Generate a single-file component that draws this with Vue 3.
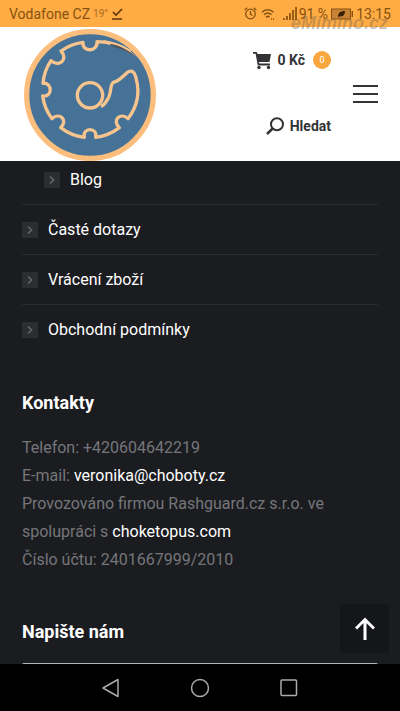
<template>

  <div class="screen">
    <div class="status-bar">
      <div class="status-left">
        <span>Vodafone CZ</span>
        <small>19°</small>
        <svg width="12" height="12" viewBox="0 0 12 12" fill="none" stroke="currentColor" stroke-width="1.600">
          <path d="M2 4l3 3 6-6M1 11h10" />
        </svg>
      </div>
      <div class="status-right">
        <svg class="alarm" width="13" height="13" viewBox="0 0 13 13" fill="none" stroke="currentColor" stroke-width="1.3">
          <circle cx="6.5" cy="7" r="4.8" />
          <path d="M6.5 4v3.3l2 1M.7 3l2.600-2.200M12.300 3L9.700 .8" />
        </svg>
        <svg class="wifi" width="14" height="12" viewBox="0 0 14 12" fill="none" stroke="currentColor" stroke-width="1.5">
          <path d="M1 4.200c3.300-3.200 8.200-3.200 11.500 0M3 6.800c2.200-2.100 5.200-2.100 7.500 0M5 9.200c1.100-1 2.400-1 3.500 0" />
          <path d="M10 11h1M12 11h1" />
        </svg>
        <svg width="14" height="13" viewBox="0 0 14 13" fill="none" stroke="currentColor" stroke-width="1.700">
          <path d="M1 13v-2M4 13V9M7 13V6M10 13V3M13 13V0" />
        </svg>
        <span class="percent">91 %</span>
        <svg class="battery" width="22" height="12" viewBox="0 0 22 12">
          <rect x=".5" y="1" width="19" height="10" fill="#c98334" stroke="currentColor" />
          <path d="M21.300 3v6" stroke="currentColor" stroke-width="1.400" />
          <path d="M7 9c0-4 2-6 7-6 0 4-2 6-5 5l-1 1z" fill="#3a2208" />
        </svg>
        <span>13:15</span>
      </div>
      <span class="watermark">eMimino.cz</span>
    </div>

    <header class="header">
      <a href="#" class="logo" aria-label="Choketopus">
        <svg width="132" height="132" viewBox="26 20 396 396" fill="none">
          <circle cx="224" cy="218" r="190" fill="#467298" stroke="#fbbe7c" stroke-width="16" />
          <g stroke="#f8c48d" stroke-width="10" stroke-linejoin="round">
            <path d="M345 88C316 68 280 59 245 58C248 90 200 90 203 60A143 143 0 0 0 137 86C160 110 132 136 107 115A143 143 0 0 0 83 183C112 180 112 226 82 221A143 143 0 0 0 110 289C132 268 160 294 136 316A143 143 0 0 0 207 345C200 314 248 314 241 345A143 143 0 0 0 312 316C288 294 316 268 338 289C364 255 374 213 363 171C359 150 350 140 335 151C318 166 312 176 294 180C282 188 290 214 276 232C270 243 265 249 257 252" />
            <circle cx="224" cy="219" r="38" />
          </g>
          <path d="M264 53Q325 62 367 106Q325 76 264 62z" fill="#f8c48d" />
          <path d="M285 64Q328 72 364 104Q328 83 285 69z" fill="#4d5359" />
        </svg>
      </a>
      <div class="actions">
        <a href="#" class="action">
          <svg width="19" height="19" viewBox="0 0 19 19" fill="currentColor">
            <path d="M0 1h3.800l.6 2H18l-1.500 8H6l.4 1.600h10.600v1.800H4.800L2.600 2.800H0z" />
            <circle cx="6" cy="16.500" r="1.700" />
            <circle cx="15.500" cy="16.500" r="1.700" />
          </svg>
          <span>0 Kč</span>
          <span class="badge">0</span>
        </a>
        <button class="action">
          <svg width="19" height="18" viewBox="0 0 19 18" fill="none" stroke="currentColor">
            <circle cx="11" cy="7.200" r="6" stroke-width="2" />
            <path d="M6.700 11.500L1 17" stroke-width="2.500" />
          </svg>
          <span>Hledat</span>
        </button>
      </div>
      <button class="hamburger" aria-label="Menu">
        <span></span>
        <span></span>
        <span></span>
      </button>
    </header>

    <main class="content">
      <nav>
        <ul class="menu">
          <li v-for="item in menu" :key="item.label" :class="{ sub: item.sub }">
            <a href="#">
              <span class="chevron">
                <svg width="6" height="8" viewBox="0 0 6 8" fill="none" stroke="currentColor" stroke-width="1.500">
                  <path d="M1 .5L4.700 4 1 7.500" />
                </svg>
              </span>
              {{ item.label }}
            </a>
          </li>
        </ul>
      </nav>

      <section class="contacts">
        <h2>Kontakty</h2>
        <p>
          Telefon: +420604642219<br>
          E-mail: <a href="mailto:veronika@choboty.cz">veronika@choboty.cz</a><br>
          Provozováno firmou Rashguard.cz s.r.o. ve spolupráci s <a href="#">choketopus.com</a><br>
          Číslo účtu: 2401667999/2010
        </p>
      </section>

      <section class="write">
        <h2><label for="message">Napište nám</label></h2>
        <input id="message" v-model="message" type="text">
      </section>

      <button class="to-top" aria-label="Nahoru" @click="scrollTop">
        <svg width="20" height="24" viewBox="0 0 20 24" fill="none" stroke="currentColor" stroke-width="3">
          <path d="M10 23V3M1 11.500l9-9 9 9" />
        </svg>
      </button>
    </main>

    <div class="system-nav">
      <button aria-label="Zpět">
        <svg width="20" height="20" viewBox="0 0 20 20"><path d="M17 1.500v17L2 10z" /></svg>
      </button>
      <button aria-label="Domů">
        <svg width="20" height="20" viewBox="0 0 20 20"><circle cx="10" cy="10" r="8.500" /></svg>
      </button>
      <button aria-label="Poslední aplikace">
        <svg width="20" height="20" viewBox="0 0 20 20"><rect x="2" y="2" width="15.500" height="15.500" rx="1" /></svg>
      </button>
    </div>
  </div>

</template>


<script setup>

  import { ref } from 'vue'

  const message = ref('')

  const menu = [
    { label: 'Blog', sub: true },
    { label: 'Časté dotazy' },
    { label: 'Vrácení zboží' },
    { label: 'Obchodní podmínky' }
  ]

  const scrollTop = () => window.scrollTo({ top: 0, behavior: 'smooth' })

</script>


<style>

  body {
    background: #1b1c20;
  }

</style>

<style scoped>

  .screen {
    height: 100vh;
    display: flex;
    flex-direction: column;
    font-family: Roboto, "Liberation Sans", sans-serif;
    font-size: 16px;
    color: #fff;
    background: #1b1c20;
  }

  button {
    padding: 0;
    border: none;
    background: none;
    color: inherit;
    font: inherit;
    cursor: pointer;
  }

  a {
    color: inherit;
    text-decoration: none;
  }

  svg {
    display: block;
    flex: none;
  }

  .status-bar {
    position: relative;
    display: flex;
    flex: none;
    justify-content: space-between;
    align-items: center;
    height: 27px;
    padding: 0 9px;
    box-sizing: border-box;
    background: #ffac45;
    color: #86510f;
    font-size: 14px;
    white-space: nowrap;
  }

  .status-left,
  .status-right {
    display: flex;
    align-items: center;
  }

  .status-left {
    gap: 3px;
  }

  .status-left small {
    font-size: 10px;
    opacity: 0.7;
  }

  .status-left svg {
    color: #5c3608;
  }

  .wifi {
    margin: 0 8px 0 4px;
  }

  .percent {
    margin-left: 2px;
  }

  .battery {
    margin: 0 3px;
  }

  .watermark {
    position: absolute;
    right: 12px;
    top: 12px;
    z-index: 1;
    color: rgba(120, 100, 75, 0.4);
    font: italic bold 18px/22px "Liberation Sans", sans-serif;
  }

  .header {
    display: flex;
    flex: none;
    align-items: center;
    height: 134px;
    padding: 0 22px 0 24px;
    background: #fff;
    color: #333336;
  }

  .logo {
    align-self: flex-end;
  }

  .actions {
    display: flex;
    flex-direction: column;
    align-items: flex-end;
    gap: 46px;
    margin-left: auto;
    margin-right: 22px;
    padding-bottom: 2px;
  }

  .action {
    display: flex;
    align-items: center;
    gap: 5px;
    height: 20px;
    font-size: 14px;
    font-weight: 700;
  }

  .badge {
    width: 18px;
    margin-left: 3px;
    border-radius: 50%;
    background: #f9a63f;
    color: #fff;
    font-size: 9px;
    font-weight: 400;
    line-height: 18px;
    text-align: center;
  }

  .hamburger {
    display: flex;
    flex-direction: column;
    gap: 6px;
    width: 25px;
  }

  .hamburger span {
    height: 2px;
    background: #333336;
  }

  .content {
    position: relative;
    flex: 1;
    min-height: 0;
    padding: 0 22px;
    overflow: hidden;
  }

  .menu {
    margin: 0 0 36px;
    padding: 0;
    list-style: none;
  }

  .menu li {
    padding: 15px 0 14px;
    border-bottom: 1px solid #2a2b2f;
    line-height: 20px;
  }

  .menu li:last-child {
    border-color: transparent;
  }

  .menu .sub {
    padding: 9px 0 14px 22px;
  }

  .menu a {
    display: flex;
    align-items: center;
    gap: 10px;
  }

  .chevron {
    display: flex;
    justify-content: center;
    align-items: center;
    width: 16px;
    height: 16px;
    background: #2c2d31;
    color: #67686c;
  }

  h2 {
    margin: 0;
    font-size: 18px;
    font-weight: 700;
    line-height: 24px;
  }

  .contacts p {
    margin: 19px 0 46px;
    color: #75767a;
    line-height: 28px;
  }

  .contacts a {
    color: #fff;
  }

  .write input {
    display: block;
    width: 100%;
    height: 40px;
    margin-top: 19px;
    border: 2px solid #b5b5b7;
    border-radius: 2px;
    box-sizing: border-box;
    background: #fff;
  }

  .to-top {
    position: absolute;
    right: 11px;
    bottom: 11px;
    display: flex;
    justify-content: center;
    align-items: center;
    width: 49px;
    height: 49px;
    background: #15161a;
  }

  .system-nav {
    display: flex;
    flex: none;
    justify-content: center;
    height: 47px;
    background: #000;
  }

  .system-nav button {
    display: flex;
    justify-content: center;
    align-items: center;
    width: 89px;
  }

  .system-nav svg {
    fill: none;
    stroke: #aaa;
    stroke-width: 1.5;
    stroke-linejoin: round;
  }

</style>
